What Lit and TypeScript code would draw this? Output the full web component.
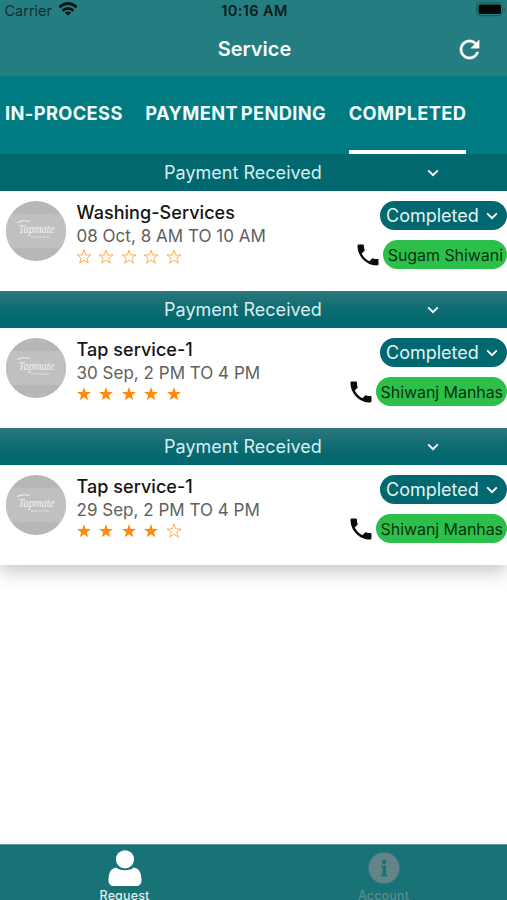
import { LitElement, html, css, svg } from "lit";
import { customElement, property } from "lit/decorators.js";

interface Job {
  name: string;
  time: string;
  rating: number;
  person: string;
}

const JOBS: Job[] = [
  { name: "Washing-Services", time: "08 Oct, 8 AM TO 10 AM", rating: 0, person: "Sugam Shiwani" },
  { name: "Tap service-1", time: "30 Sep, 2 PM TO 4 PM", rating: 5, person: "Shiwanj Manhas" },
  { name: "Tap service-1", time: "29 Sep, 2 PM TO 4 PM", rating: 4, person: "Shiwanj Manhas" },
];

const chevron = html`<svg class="chevron" width="12" height="8" viewBox="0 0 12 8">
  <path d="M1.2 1.4 6 6.2 10.8 1.4" fill="none" stroke="currentColor" stroke-width="1.9" />
</svg>`;

const STAR = "M8 1 9.7 6H15L10.8 9.2 12.3 14.2 8 11.2 3.7 14.2 5.2 9.2 1 6H6.3Z";

@customElement("job-card")
class JobCard extends LitElement {
  @property({ attribute: false }) job!: Job;

  static styles = css`
    :host { display: block; }
    .bar {
      height: 37px;
      display: grid;
      grid-template-columns: 360px 146px;
      align-items: center;
      background: #00686e;
      color: #d9eeef;
      font-size: 18px;
      letter-spacing: 0.02px;
    }
    :host([shaded]) .bar {
      background: linear-gradient(#2b787c, #0f6d73 45%, #00686e 85%);
    }
    .bar span { padding-left: 164px; white-space: nowrap; }
    .bar .chevron { justify-self: center; color: #fff; }
    .body {
      height: 100px;
      box-sizing: border-box;
      background: #fff;
      display: flex;
      padding: 10px 0 0 6px;
    }
    .logo { width: 60px; height: 60px; flex: none; border-radius: 50%; background: #b7b7b7; overflow: hidden; }
    .logo text { font-family: "Liberation Serif", serif; font-style: italic; }
    .info { margin-left: 10.5px; flex: 1; white-space: nowrap; }
    .name { font-size: 18px; font-weight: 500; line-height: 23px; color: #141414; height: 24px; letter-spacing: 0.05px; }
    .time { font-size: 17px; line-height: 22px; height: 24px; color: #606060; letter-spacing: 0.02px; }
    .stars { display: flex; gap: 6.5px; margin-left: -0.8px; }
    .stars svg { display: block; }
    .side { display: flex; flex-direction: column; align-items: flex-end; }
    .pill {
      height: 29px;
      box-sizing: border-box;
      border-radius: 15px;
      display: flex;
      align-items: center;
      white-space: nowrap;
    }
    .status { width: 127px; padding-left: 6px; gap: 7px; background: #00686e; color: #e3f3f3; font-size: 18px; }
    .status .chevron { color: #fff; }
    .contact { display: flex; align-items: center; gap: 0.5px; margin-top: 10px; }
    .person { background: #2cc04b; color: #07330f; font-size: 16px; letter-spacing: -0.06px; padding: 0 4px 0 5px; }
  `;

  render() {
    const j = this.job;
    return html`
      <div class="bar"><span>Payment Received</span>${chevron}</div>
      <div class="body">
        <svg class="logo" viewBox="0 0 60 60">
          <rect y="13" width="60" height="34" fill="#c0c0c0" />
          <path d="M11 21.5Q17 18.5 24 20.5" fill="none" stroke="#f0f0f0" stroke-width="1.1" />
          <text x="12.5" y="31.5" font-size="13" fill="#f2f2f2" textLength="36" lengthAdjust="spacingAndGlyphs">Tapmate</text>
          <path d="M25 36H44" stroke="#d8d8d8" stroke-width="1.3" stroke-dasharray="3 .7" />
        </svg>
        <div class="info">
          <div class="name">${j.name}</div>
          <div class="time">${j.time}</div>
          <div class="stars">
            ${[0, 1, 2, 3, 4].map((i) => html`<svg width="16" height="16" viewBox="0 0 16 16">
              ${i < j.rating
                ? svg`<path d=${STAR} fill="#ff8a0c" />`
                : svg`<path d=${STAR} fill="none" stroke="#ffad58" stroke-width="1" />`}
            </svg>`)}
          </div>
        </div>
        <div class="side">
          <div class="pill status"><span>Completed</span>${chevron}</div>
          <div class="contact">
            <svg width="28" height="28" viewBox="0 0 24 24">
              <path fill="#0a0a0a" d="M6.62 10.79c1.44 2.83 3.76 5.14 6.59 6.59l2.2-2.2c.27-.27.67-.36 1.02-.24 1.12.37 2.33.57 3.57.57.55 0 1 .45 1 1V20c0 .55-.45 1-1 1-9.39 0-17-7.61-17-17 0-.55.45-1 1-1h3.5c.55 0 1 .45 1 1 0 1.25.2 2.45.57 3.57.11.35.03.74-.25 1.02z" />
            </svg>
            <div class="pill person">${j.person}</div>
          </div>
        </div>
      </div>
    `;
  }
}

@customElement("app-root")
class AppRoot extends LitElement {
  static styles = css`
    :host {
      display: flex;
      flex-direction: column;
      height: 900px;
      overflow: hidden;
      background: #fff;
      font-family: Inter, "Liberation Sans", sans-serif;
    }
    .head { height: 76px; flex: none; background: #247e81; }
    .system {
      height: 20px;
      display: grid;
      grid-template-columns: 1fr auto 1fr;
      align-items: center;
      font-size: 14.5px;
      color: #112f31;
    }
    .carrier { display: flex; align-items: center; gap: 6px; padding-left: 4.5px; }
    .carrier svg { margin-top: -2px; }
    .clock { font-weight: 600; color: #0a1c1d; letter-spacing: 0.4px; font-size: 14.5px; padding-left: 2px; }
    .battery { justify-self: end; display: block; margin-top: -1px; }
    .title {
      height: 56px;
      display: grid;
      grid-template-columns: 1fr auto 1fr;
      align-items: center;
      color: #f4fafa;
      font-size: 20px;
      font-weight: 600;
    }
    .title span { grid-column: 2; padding-left: 2px; padding-top: 2px; }
    .title svg { justify-self: end; margin: 2px 23px 0 0; }
    .tabs {
      height: 78px;
      flex: none;
      position: relative;
      z-index: 1;
      background: #007b82;
      display: flex;
      padding-left: 5px;
      gap: 22.6px;
      color: #f2fbfb;
      font-size: 18.3px;
      font-weight: 650;
      letter-spacing: 0.36px;
      word-spacing: -2px;
      white-space: nowrap;
    }
    .tab { box-sizing: border-box; height: 78px; line-height: 74px; border-bottom: 4px solid transparent; }
    .active { border-color: #fff; }
    .list { flex: none; box-shadow: 0 6px 18px rgba(0, 0, 0, 0.24); }
    .nav {
      margin-top: auto;
      height: 56px;
      flex: none;
      box-sizing: border-box;
      border-top: 1px solid #5b9b9e;
      background: #187276;
      display: grid;
      grid-template-columns: 249px 1fr;
      overflow: hidden;
      font-size: 12.5px;
      font-weight: 500;
      letter-spacing: 0.15px;
    }
    .item { display: flex; flex-direction: column; align-items: center; color: #e0eeee; }
    .item svg { flex: none; margin-top: 4px; }
    .item span { line-height: 16px; margin-top: 1px; }
    .muted { color: #5b8c8e; padding-left: 11px; }
    .muted svg { margin-top: 5px; }
    .muted span { margin-top: 0; }
  `;

  render() {
    return html`
      <div class="head">
        <div class="system">
          <div class="carrier">
            <span>Carrier</span>
            <svg width="20" height="14" viewBox="0 0 20 14" fill="none" stroke="#081516" stroke-width="2.7">
              <path d="M1.3 5.2Q10-2.2 18.7 5.2M4.6 8.6Q10 4 15.4 8.6" />
              <path d="M10 13.8 6.7 10.6Q10 8.2 13.3 10.6Z" fill="#081516" stroke="none" />
            </svg>
          </div>
          <span class="clock">10:16 AM</span>
          <svg class="battery" width="31" height="15" viewBox="0 0 31 15">
            <rect x=".7" y=".7" width="25.6" height="13" rx="3.6" fill="none" stroke="#1b5e60" stroke-width="1.2" />
            <rect x="2.5" y="2.5" width="22.5" height="9.6" rx="2.2" fill="#020606" />
            <path d="M28 5.2Q30.5 7.2 28 9.2Z" fill="#1b5e60" />
          </svg>
        </div>
        <div class="title">
          <span>Service</span>
          <svg width="29" height="29" viewBox="0 0 24 24">
            <path fill="#fff" stroke="#fff" stroke-width=".3" d="M17.65 6.35C16.2 4.9 14.21 4 12 4c-4.42 0-7.99 3.58-7.99 8s3.57 8 7.99 8c3.73 0 6.84-2.55 7.73-6h-2.08c-.82 2.33-3.04 4-5.65 4-3.31 0-6-2.69-6-6s2.69-6 6-6c1.66 0 3.14.69 4.22 1.78L13 11h7V4l-2.35 2.35z" />
          </svg>
        </div>
      </div>
      <div class="tabs">
        <div class="tab">IN-PROCESS</div>
        <div class="tab">PAYMENT PENDING</div>
        <div class="tab active">COMPLETED</div>
      </div>
      <div class="list">
        ${JOBS.map((job, i) => html`<job-card .job=${job} ?shaded=${i > 0}></job-card>`)}
      </div>
      <div class="nav">
        <div class="item">
          <svg width="34" height="38" viewBox="0 0 34 38" fill="#fff">
            <path d="M8.5 18.5C11 22 23 22 25.5 18.5 31 19 33.5 24 33.5 31 33.5 35 31.5 37 28 37H6C2.5 37 .5 35 .5 31 .5 24 3 19 8.5 18.5Z" />
            <circle cx="17" cy="10.3" r="9.8" stroke="#187276" stroke-width="1.4" />
          </svg>
          <span>Request</span>
        </div>
        <div class="item muted">
          <svg width="38" height="38" viewBox="0 0 38 38">
            <circle cx="19" cy="18" r="15.5" fill="#648587" />
            <path d="M16.5 15.5H21V24.5H22.5V26.5H16V24.5H17.7V17.5H16.5Z" fill="#187276" />
            <circle cx="19.2" cy="11.7" r="2.2" fill="#187276" />
          </svg>
          <span>Account</span>
        </div>
      </div>
    `;
  }
}
